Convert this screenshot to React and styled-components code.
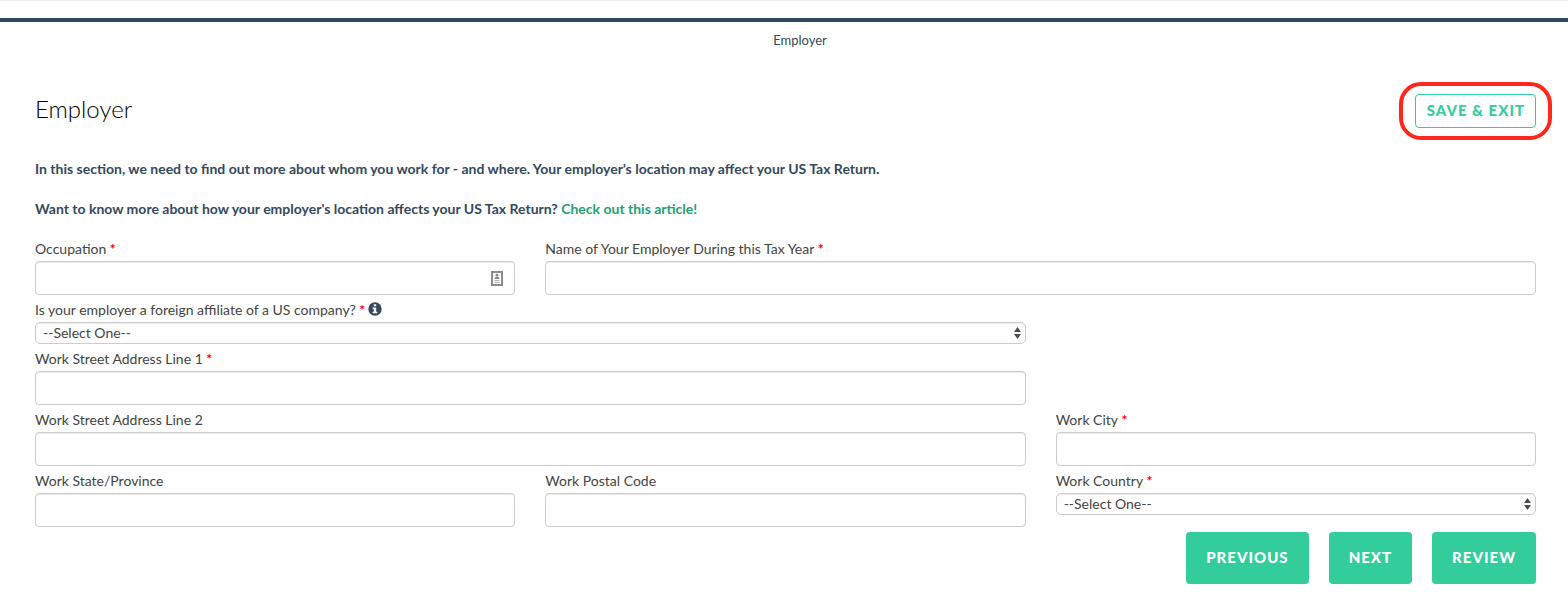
import styled, { createGlobalStyle } from 'styled-components'

const colors = {
  navy: '#34495e',
  green: '#32cd9a',
  link: '#239f78',
  label: '#444444',
  border: '#cccccc',
  required: '#ff0000',
  highlight: '#ff271c',
}

const GlobalStyle = createGlobalStyle`
  *, *::before, *::after { box-sizing: border-box; }

  body {
    margin: 0;
    background: #ffffff;
    color: ${colors.navy};
    font-family: Lato, "Open Sans", sans-serif;
    font-size: 14px;
    line-height: 20px;
  }

  button, input, select { font-family: inherit; }
`

const TopBar = styled.header`
  height: 22px;
  border-top: 1px solid #f0f0f0;
  border-bottom: 4px solid ${colors.navy};
`

const Steps = styled.nav`
  display: flex;
  justify-content: center;
  padding: 8px 0 8px 32px;
`

const StepLink = styled.a`
  color: ${colors.navy};
  font-size: 13px;
  text-decoration: none;
`

const Page = styled.main`
  padding: 36px 32px 22px 35px;
`

const PageHeader = styled.div`
  display: flex;
  align-items: flex-start;
  justify-content: space-between;
`

const PageTitle = styled.h1`
  margin: 0;
  color: #000000;
  font-size: 24px;
  font-weight: 300;
  line-height: 30px;
`

const Highlight = styled.div`
  position: relative;

  &::after {
    content: '';
    position: absolute;
    inset: -12px -16px;
    border: 4px solid ${colors.highlight};
    border-radius: 22px;
    pointer-events: none;
  }
`

const OutlineButton = styled.button`
  display: block;
  height: 34px;
  padding: 0 10px 2px 11px;
  background: #ffffff;
  border: 1px solid ${colors.green};
  border-radius: 4px;
  color: ${colors.green};
  font-size: 15px;
  font-weight: 900;
  letter-spacing: 1px;
  cursor: pointer;
`

const Intro = styled.div`
  display: flex;
  flex-direction: column;
  gap: 20px;
  padding: 31px 0 22px;

  p {
    margin: 0;
    font-size: 14px;
    font-weight: 700;
  }

  a {
    color: ${colors.link};
    text-decoration: none;
  }
`

const Form = styled.form`
  display: grid;
  grid-template-columns: repeat(3, minmax(0, 1fr));
  gap: 7px 30px;
`

const Field = styled.div`
  grid-column: ${props => props.$start || 'auto'} / span ${props => props.$span || 1};
`

const LabelRow = styled.div`
  display: flex;
  gap: 3px;
  height: 20px;
  line-height: 16px;
`

const Label = styled.label`
  color: ${colors.label};
`

const Required = styled.span`
  color: ${colors.required};
  font-weight: 700;
`

const InfoButton = styled.button`
  height: 14px;
  padding: 0;
  background: none;
  border: none;
  cursor: help;

  svg { display: block; }
`

const Control = styled.div`
  position: relative;
`

const TextInput = styled.input`
  display: block;
  width: 100%;
  height: 34px;
  padding: 6px 12px;
  background: #ffffff;
  border: 1px solid ${colors.border};
  border-radius: 4px;
  box-shadow: inset 0 1px 1px rgba(0, 0, 0, 0.075);
  color: #555555;
  font-size: 14px;
`

const Select = styled.select`
  display: block;
  appearance: none;
  width: 100%;
  height: 22px;
  padding: 0 24px 2px 7px;
  background: #ffffff;
  border: 1px solid ${colors.border};
  border-radius: 5px;
  box-shadow: inset 0 1px 1px rgba(0, 0, 0, 0.075);
  color: #444444;
  font-size: 14px;
`

const ControlIcon = styled.svg`
  position: absolute;
  top: 50%;
  right: ${props => props.$right}px;
  transform: translateY(-50%);
  pointer-events: none;
`

const Actions = styled.div`
  display: flex;
  justify-content: flex-end;
  gap: 20px;
  padding-top: 5px;
`

const ActionButton = styled.button`
  height: 52px;
  padding: 0 20px 2px;
  background: ${colors.green};
  border: none;
  border-radius: 4px;
  color: #ffffff;
  font-size: 15px;
  font-weight: 900;
  letter-spacing: 1px;
  cursor: pointer;
`

const ContactIcon = () => (
  <ControlIcon $right={12} width="12" height="16" viewBox="0 0 12 16" aria-hidden="true">
    <rect x="1" y="2" width="10" height="13" fill="#ffffff" stroke="#8c8c8c" strokeWidth="2" />
    <circle cx="6" cy="5.2" r="1.4" fill="#858585" />
    <path d="M3.6 9V8Q6 5.4 8.4 8V9Z" fill="#858585" />
    <path d="M3.5 10.5H8.5M3.5 12.5H8.5" stroke="#b0b0b0" />
  </ControlIcon>
)

const ArrowsIcon = () => (
  <ControlIcon $right={5} width="7" height="12" viewBox="0 0 7 12" aria-hidden="true">
    <path d="M3.5 0L7 5H0Z M3.5 12L7 7H0Z" fill="#4d4d4d" />
  </ControlIcon>
)

const InfoIcon = () => (
  <svg width="14" height="14" viewBox="0 0 14 14" aria-hidden="true">
    <circle cx="7" cy="7" r="6.7" fill={colors.navy} />
    <path d="M5.8 2.2H8.2V4.3H5.8Z M4.7 5.4H8.2V9.7H9.3V11.3H4.7V9.7H5.8V7H4.7Z" fill="#ffffff" />
  </svg>
)

const fields = [
  { id: 'occupation', label: 'Occupation', required: true, contact: true },
  { id: 'employer', label: 'Name of Your Employer During this Tax Year', required: true, span: 2 },
  { id: 'affiliate', label: 'Is your employer a foreign affiliate of a US company?', required: true, info: true, select: true, span: 2, start: 1 },
  { id: 'street1', label: 'Work Street Address Line 1', required: true, span: 2, start: 1 },
  { id: 'street2', label: 'Work Street Address Line 2', span: 2, start: 1 },
  { id: 'city', label: 'Work City', required: true },
  { id: 'state', label: 'Work State/Province' },
  { id: 'postal', label: 'Work Postal Code' },
  { id: 'country', label: 'Work Country', required: true, select: true },
]

const FormField = ({ field }) => (
  <Field $span={field.span} $start={field.start}>
    <LabelRow>
      <Label htmlFor={field.id}>
        {field.label}{field.required && <Required> *</Required>}
      </Label>
      {field.info && (
        <InfoButton type="button" aria-label="More information"><InfoIcon /></InfoButton>
      )}
    </LabelRow>
    <Control>
      {field.select ? (
        <>
          <Select id={field.id} name={field.id}>
            <option value="">--Select One--</option>
          </Select>
          <ArrowsIcon />
        </>
      ) : (
        <TextInput id={field.id} name={field.id} type="text" />
      )}
      {field.contact && <ContactIcon />}
    </Control>
  </Field>
)

const App = () => (
  <>
    <GlobalStyle />
    <TopBar />
    <Steps>
      <StepLink href="#employer">Employer</StepLink>
    </Steps>
    <Page>
      <PageHeader>
        <PageTitle>Employer</PageTitle>
        <Highlight>
          <OutlineButton type="button">SAVE &amp; EXIT</OutlineButton>
        </Highlight>
      </PageHeader>
      <Intro>
        <p>In this section, we need to find out more about whom you work for - and where. Your employer’s location may affect your US Tax Return.</p>
        <p>Want to know more about how your employer's location affects your US Tax Return? <a href="#article">Check out this article!</a></p>
      </Intro>
      <Form id="employer-form">
        {fields.map(field => <FormField key={field.id} field={field} />)}
      </Form>
      <Actions>
        <ActionButton type="button">PREVIOUS</ActionButton>
        <ActionButton type="submit" form="employer-form">NEXT</ActionButton>
        <ActionButton type="button">REVIEW</ActionButton>
      </Actions>
    </Page>
  </>
)

export default App
